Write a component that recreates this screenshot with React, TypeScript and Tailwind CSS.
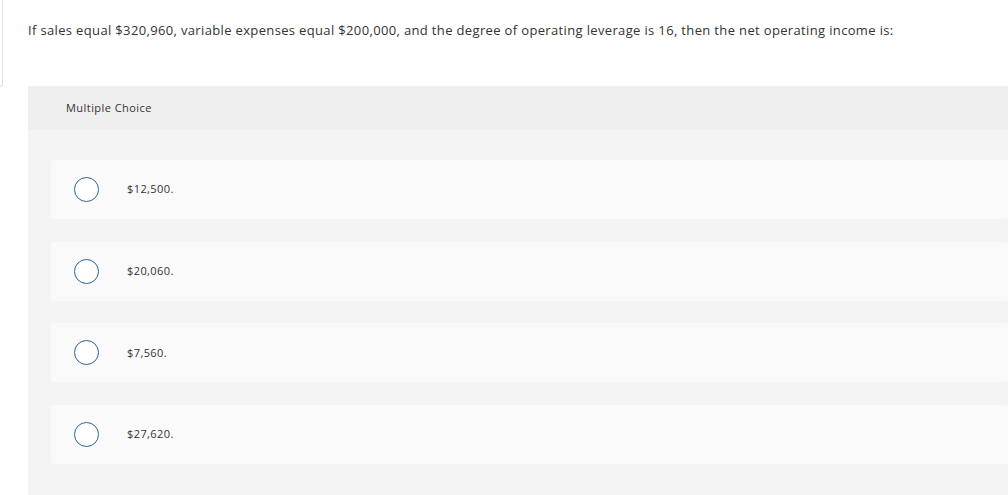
import React from "react";

const options = ["$12,500.", "$20,060.", "$7,560.", "$27,620."];

export default function App() {
  return (
    <div className="relative h-[495px] w-full overflow-hidden bg-white font-['Open_Sans','Liberation_Sans',sans-serif] text-[#333]">
      {/* edge of the side panel peeking in */}
      <div className="absolute left-0 top-0 h-[87px] w-[3px] rounded-br-[6px] border-b border-r border-[#e2e2e2]" />

      <div className="pl-[28px]">
        <p className="pt-[20px] text-[13px] leading-[20px] tracking-[0.35px] text-[#333]">
          If sales equal $320,960, variable expenses equal $200,000, and the degree of operating leverage is 16, then the net operating income is:
        </p>

        <div className="mt-[46px] flex h-[44px] items-center bg-[#efefef] pl-[38px] text-[11px] tracking-[0.45px] text-[#333]">
          Multiple Choice
        </div>

        <div className="flex h-[365px] flex-col gap-[22.7px] bg-[#f4f4f4] pl-[23px] pt-[30px]">
          {options.map((opt) => (
            <div
              key={opt}
              className="flex h-[59px] items-center rounded-[3px] bg-[#fafafa] pl-[23px]"
            >
              <span className="h-[25px] w-[25px] shrink-0 rounded-full border-[1.5px] border-[#2f6296] bg-white" />
              <span className="ml-[28px] text-[11px] tracking-[0.4px] text-[#333]">{opt}</span>
            </div>
          ))}
        </div>
      </div>
    </div>
  );
}
